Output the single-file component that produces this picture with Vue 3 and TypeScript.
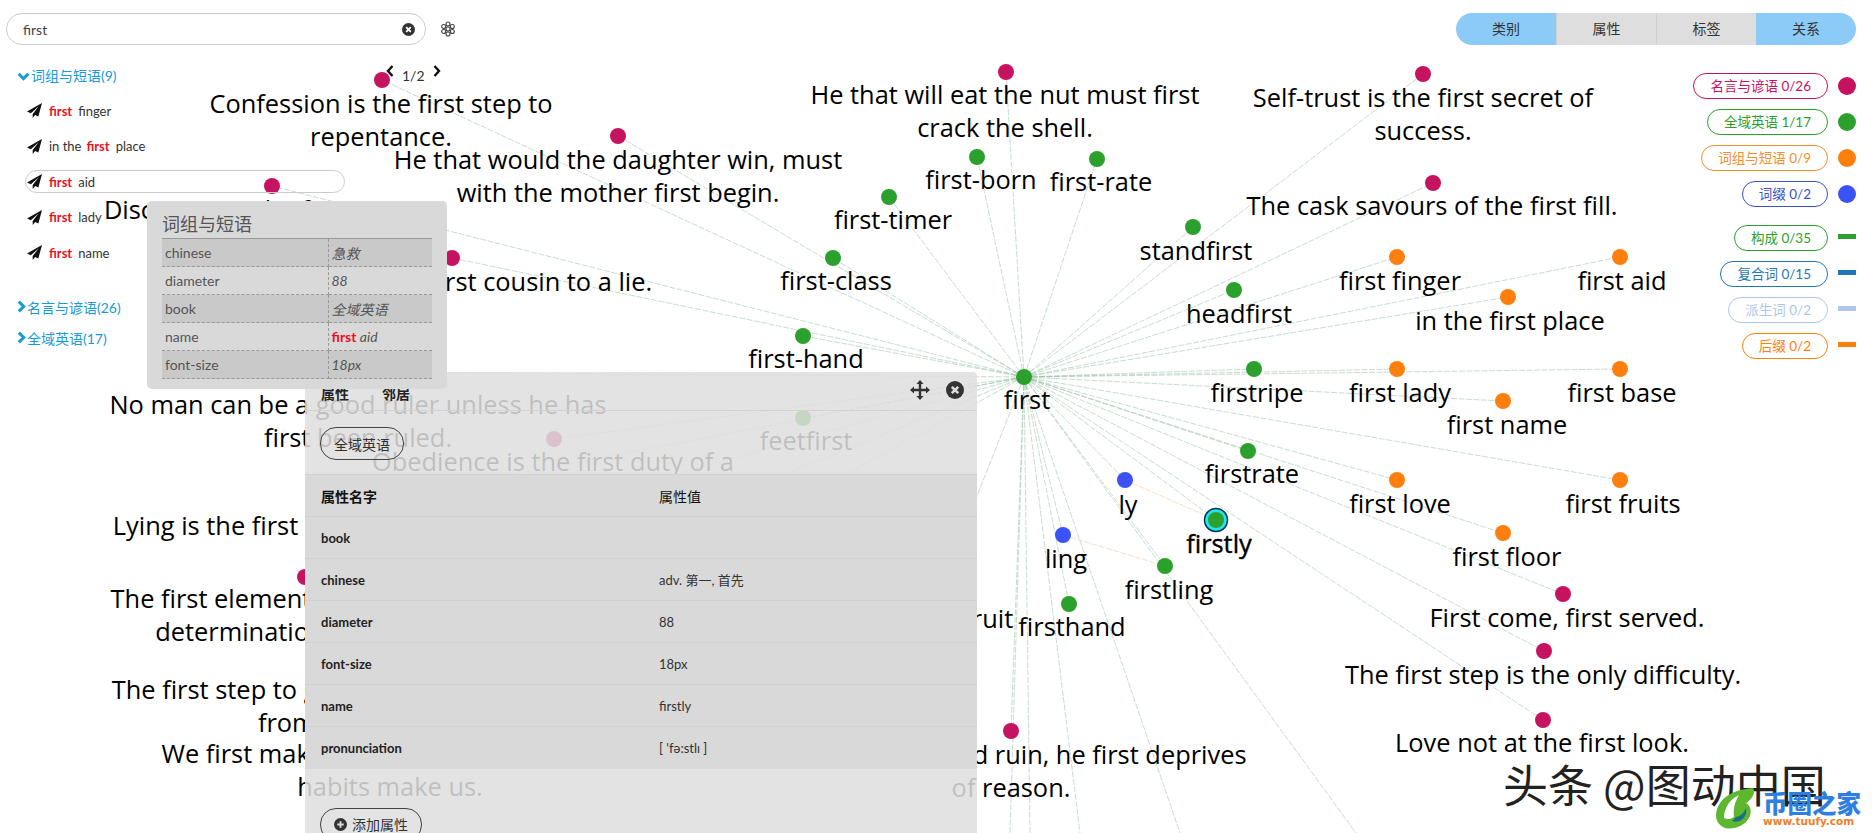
<script setup lang="ts">
import { ref } from 'vue'

interface GNode {
  x: number
  y: number
  c: 'm' | 'g' | 'o' | 'b'
  lines: string[]
  lx: number
  ly: number
}

const colors: Record<string, string> = { m: '#c6135f', g: '#2ca02c', o: '#ff7f0e', b: '#3b52f6' }
const center = { x: 1024, y: 377 }

const nodes: GNode[] = [
  { x: 382, y: 80, c: 'm', lines: ['Confession is the first step to', 'repentance.'], lx: 381, ly: 113 },
  { x: 618, y: 136, c: 'm', lines: ['He that would the daughter win, must', 'with the mother first begin.'], lx: 618, ly: 169 },
  { x: 272, y: 186, c: 'm', lines: ['Discretion is the first point'], lx: 260, ly: 219 },
  { x: 452, y: 258, c: 'm', lines: ['Flattery is the first cousin to a lie.'], lx: 458, ly: 291 },
  { x: 358, y: 372, c: 'm', lines: ['No man can be a good ruler unless he has', 'first been ruled.'], lx: 358, ly: 414 },
  { x: 554, y: 439, c: 'm', lines: ['Obedience is the first duty of a'], lx: 553, ly: 471 },
  { x: 380, y: 500, c: 'm', lines: ['Lying is the first step to the gallows.'], lx: 323, ly: 535 },
  { x: 305, y: 577, c: 'm', lines: ['The first element of success is the', 'determination to succeed.'], lx: 310, ly: 608 },
  { x: 330, y: 660, c: 'm', lines: ['The first step to getting somewhere is to decide', 'from where you stand.'], lx: 392, ly: 699 },
  { x: 388, y: 725, c: 'm', lines: ['We first make our habits, and then our', 'habits make us.'], lx: 390, ly: 763 },
  { x: 1011, y: 731, c: 'm', lines: ['Whom God would ruin, he first deprives', 'of reason.'], lx: 1011, ly: 764 },
  { x: 1006, y: 72, c: 'm', lines: ['He that will eat the nut must first', 'crack the shell.'], lx: 1005, ly: 104 },
  { x: 1423, y: 74, c: 'm', lines: ['Self-trust is the first secret of', 'success.'], lx: 1423, ly: 107 },
  { x: 1433, y: 183, c: 'm', lines: ['The cask savours of the first fill.'], lx: 1432, ly: 215 },
  { x: 1563, y: 594, c: 'm', lines: ['First come, first served.'], lx: 1567, ly: 627 },
  { x: 1544, y: 651, c: 'm', lines: ['The first step is the only difficulty.'], lx: 1543, ly: 684 },
  { x: 1543, y: 720, c: 'm', lines: ['Love not at the first look.'], lx: 1542, ly: 752 },
  { x: 977, y: 157, c: 'g', lines: ['first-born'], lx: 981, ly: 189 },
  { x: 1097, y: 159, c: 'g', lines: ['first-rate'], lx: 1101, ly: 191 },
  { x: 889, y: 197, c: 'g', lines: ['first-timer'], lx: 893, ly: 229 },
  { x: 1193, y: 227, c: 'g', lines: ['standfirst'], lx: 1196, ly: 260 },
  { x: 833, y: 258, c: 'g', lines: ['first-class'], lx: 836, ly: 290 },
  { x: 1234, y: 290, c: 'g', lines: ['headfirst'], lx: 1239, ly: 323 },
  { x: 803, y: 336, c: 'g', lines: ['first-hand'], lx: 806, ly: 368 },
  { x: 1254, y: 369, c: 'g', lines: ['firstripe'], lx: 1257, ly: 402 },
  { x: 803, y: 418, c: 'g', lines: ['feetfirst'], lx: 806, ly: 450 },
  { x: 1248, y: 451, c: 'g', lines: ['firstrate'], lx: 1252, ly: 483 },
  { x: 1216, y: 520, c: 'g', lines: ['firstly'], lx: 1219, ly: 553 },
  { x: 1165, y: 566, c: 'g', lines: ['firstling'], lx: 1169, ly: 599 },
  { x: 1069, y: 604, c: 'g', lines: ['firsthand'], lx: 1072, ly: 636 },
  { x: 940, y: 590, c: 'g', lines: ['firstfruit'], lx: 965, ly: 628 },
  { x: 1125, y: 480, c: 'b', lines: ['ly'], lx: 1128, ly: 514 },
  { x: 1063, y: 535, c: 'b', lines: ['ling'], lx: 1066, ly: 568 },
  { x: 1397, y: 257, c: 'o', lines: ['first finger'], lx: 1400, ly: 290 },
  { x: 1620, y: 257, c: 'o', lines: ['first aid'], lx: 1622, ly: 290 },
  { x: 1508, y: 297, c: 'o', lines: ['in the first place'], lx: 1510, ly: 330 },
  { x: 1397, y: 369, c: 'o', lines: ['first lady'], lx: 1400, ly: 402 },
  { x: 1620, y: 369, c: 'o', lines: ['first base'], lx: 1622, ly: 402 },
  { x: 1503, y: 401, c: 'o', lines: ['first name'], lx: 1507, ly: 434 },
  { x: 1397, y: 480, c: 'o', lines: ['first love'], lx: 1400, ly: 513 },
  { x: 1620, y: 480, c: 'o', lines: ['first fruits'], lx: 1623, ly: 513 },
  { x: 1503, y: 533, c: 'o', lines: ['first floor'], lx: 1507, ly: 566 }
]

const extraEnds = [
  { x: 1010, y: 833 },
  { x: 1030, y: 833 },
  { x: 1356, y: 833 },
  { x: 1180, y: 833 },
  { x: 1080, y: 833 }
]

const treeItems = [
  { before: '', after: 'finger' },
  { before: 'in the', after: 'place' },
  { before: '', after: 'aid', hover: true },
  { before: '', after: 'lady' },
  { before: '', after: 'name' }
]

const tabs = [
  { label: '类别', on: true },
  { label: '属性', on: false },
  { label: '标签', on: false },
  { label: '关系', on: true }
]

const legend = [
  { text: '名言与谚语 0/26', ink: '#c6135f', fill: '#c6135f' },
  { text: '全域英语 1/17', ink: '#2ca02c', fill: '#2ca02c' },
  { text: '词组与短语 0/9', ink: '#f09030', fill: '#ff7f0e' },
  { text: '词缀 0/2', ink: '#3b52c6', fill: '#3b52f6' }
]
const legend2 = [
  { text: '构成 0/35', ink: '#2ca02c', fill: '#2ca02c' },
  { text: '复合词 0/15', ink: '#1f77b4', fill: '#1f77b4' },
  { text: '派生词 0/2', ink: '#aec7e8', fill: '#aec7e8' },
  { text: '后缀 0/2', ink: '#ff7f0e', fill: '#ff7f0e' }
]

const popRows = [
  ['chinese', '急救'],
  ['diameter', '88'],
  ['book', '全域英语'],
  ['name', ''],
  ['font-size', '18px']
]

const attrs = [
  ['book', ''],
  ['chinese', 'adv. 第一, 首先'],
  ['diameter', '88'],
  ['font-size', '18px'],
  ['name', 'firstly'],
  ['pronunciation', "[ 'fə:stlɪ ]"]
]

const query = ref('first')
</script>

<template>
  <div class="page">
    <svg class="canvas" width="1874" height="833" viewBox="0 0 1874 833">
      <g class="edges">
        <line v-for="(n, i) in nodes" :key="'e' + i" :x1="center.x" :y1="center.y" :x2="n.x" :y2="n.y" />
        <line v-for="(e, i) in extraEnds" :key="'x' + i" :x1="center.x" :y1="center.y" :x2="e.x" :y2="e.y" />
        <line class="edge-o" x1="1125" y1="480" x2="1216" y2="520" />
        <line class="edge-o" x1="1063" y1="535" x2="1165" y2="566" />
      </g>
      <circle cx="1216" cy="520" r="11.5" fill="#22e6ee" stroke="#08324a" stroke-width="1.5" />
      <circle v-for="(n, i) in nodes" :key="'n' + i" :cx="n.x" :cy="n.y" r="8" :fill="colors[n.c]" />
      <circle :cx="center.x" :cy="center.y" r="8" fill="#2ca02c" />
      <g class="labels">
        <text :x="1027" :y="409">first</text>
        <template v-for="(n, i) in nodes" :key="'l' + i">
          <text
            v-for="(t, j) in n.lines"
            :key="j"
            :class="{ picked: t === 'firstly' }"
            :x="n.lx"
            :y="n.ly + j * 33"
          >{{ t }}</text>
        </template>
      </g>
    </svg>

    <div class="ui">
      <header class="top">
        <div class="search-wrap">
          <div class="search">
            <input v-model="query" class="search-input" />
            <svg class="x-icon" width="13" height="13" viewBox="0 0 14 14">
              <circle cx="7" cy="7" r="7" fill="#333" />
              <path d="M4.500 4.500l5 5M9.500 4.500l-5 5" stroke="#fff" stroke-width="2" />
            </svg>
          </div>
          <svg class="gear" width="16" height="16" viewBox="0 0 16 16" fill="none" stroke="#444" stroke-width="1.100">
            <circle cx="8" cy="8" r="2" />
            <circle cx="8" cy="3" r="2" />
            <circle cx="8" cy="13" r="2" />
            <circle cx="3.700" cy="5.500" r="2" />
            <circle cx="12.300" cy="5.500" r="2" />
            <circle cx="3.700" cy="10.500" r="2" />
            <circle cx="12.300" cy="10.500" r="2" />
          </svg>
        </div>
        <nav class="tabs">
          <div v-for="t in tabs" :key="t.label" class="tab" :class="{ on: t.on }">{{ t.label }}</div>
        </nav>
      </header>

      <div class="columns">
        <aside class="tree">
          <div class="group">
            <span class="chev">
              <svg width="13" height="9" viewBox="0 0 12 8"><path d="M1.500 1.500L6 6l4.500-4.500" fill="none" stroke="#1a9ad6" stroke-width="2.800" /></svg>
            </span>词组与短语(9)
          </div>
          <ul class="items">
            <li v-for="(it, i) in treeItems" :key="i" class="item" :class="{ hover: it.hover }">
              <svg class="plane" width="15" height="15" viewBox="0 0 14 14"><path d="M14 0L0 8l3.600 1.500L11 3 5.300 10.200V14l2.300-2.800 3 1.300z" fill="#111" /></svg>
              <span v-if="it.before" class="before">{{ it.before }}</span>
              <b class="hit">first</b>
              <span>{{ it.after }}</span>
            </li>
          </ul>
          <div class="group closed">
            <span class="chev">
              <svg width="9" height="13" viewBox="0 0 8 12"><path d="M1.500 1.500L6 6l-4.500 4.500" fill="none" stroke="#1a9ad6" stroke-width="2.800" /></svg>
            </span>名言与谚语(26)
          </div>
          <div class="group closed second">
            <span class="chev">
              <svg width="9" height="13" viewBox="0 0 8 12"><path d="M1.500 1.500L6 6l-4.500 4.500" fill="none" stroke="#1a9ad6" stroke-width="2.800" /></svg>
            </span>全域英语(17)
          </div>
        </aside>

        <aside class="legend">
          <div v-for="l in legend" :key="l.text" class="leg-row">
            <span class="pill" :style="{ color: l.ink }">{{ l.text }}</span>
            <i class="dot" :style="{ background: l.fill }"></i>
          </div>
          <div class="leg-gap"></div>
          <div v-for="l in legend2" :key="l.text" class="leg-row">
            <span class="pill" :style="{ color: l.ink }">{{ l.text }}</span>
            <i class="bar" :style="{ background: l.fill }"></i>
          </div>
        </aside>
      </div>
    </div>

    <div class="pager">
      <svg width="8" height="12" viewBox="0 0 8 12"><path d="M6.500 1L2 6l4.500 5" fill="none" stroke="#111" stroke-width="2.400" /></svg>
      <span>1/2</span>
      <svg width="8" height="12" viewBox="0 0 8 12"><path d="M1.500 1L6 6l-4.500 5" fill="none" stroke="#111" stroke-width="2.400" /></svg>
    </div>

    <section class="detail">
      <div class="d-head">
        <div class="d-tabs"><span>属性</span><span>邻居</span></div>
        <div class="d-tools">
          <svg width="20" height="20" viewBox="0 0 20 20" fill="#333">
            <path d="M10 0l3.500 4h-2.300v4.800H16V6.500l4 3.500-4 3.500v-2.300h-4.800V16h2.300L10 20l-3.500-4h2.300v-4.800H4v2.300L0 10l4-3.500v2.300h4.800V4H6.500z" />
          </svg>
          <svg width="18" height="18" viewBox="0 0 14 14">
            <circle cx="7" cy="7" r="7" fill="#333" />
            <path d="M4.500 4.500l5 5M9.500 4.500l-5 5" stroke="#ddd" stroke-width="2" />
          </svg>
        </div>
      </div>
      <div class="d-tag"><span class="round-btn">全域英语</span></div>
      <table class="d-table">
        <thead>
          <tr><th>属性名字</th><th>属性值</th></tr>
        </thead>
        <tbody>
          <tr v-for="a in attrs" :key="a[0]"><td class="k">{{ a[0] }}</td><td>{{ a[1] }}</td></tr>
        </tbody>
      </table>
      <div class="d-add">
        <span class="round-btn">
          <svg width="13" height="13" viewBox="0 0 14 14"><circle cx="7" cy="7" r="7" fill="#333" /><path d="M7 3.500v7M3.500 7h7" stroke="#ddd" stroke-width="2" /></svg>
          添加属性
        </span>
      </div>
    </section>

    <section class="pop">
      <h3 class="pop-title">词组与短语</h3>
      <table class="pop-table">
        <tbody>
          <tr v-for="r in popRows" :key="r[0]">
            <td>{{ r[0] }}</td>
            <td class="pv"><template v-if="r[0] === 'name'"><b class="hit upright">first</b> aid</template><template v-else>{{ r[1] }}</template></td>
          </tr>
        </tbody>
      </table>
    </section>

    <div class="mark">头条 @图动中国</div>
    <div class="brand">
      <svg width="40" height="42" viewBox="0 0 40 42">
        <path d="M1 28C2 14 14 3 38 1c3 5-1 11-7 15 5 3 6 9 3 15-5 9-19 13-26 9C3 37 1 33 1 28z" fill="#5db82f" />
        <path d="M9 31C9 21 14 13 24 8c-4 7-6 13-5 22-3 2-6 3-10 1z" fill="#fff" />
        <path d="M21 30c5-1 8-4 10-9 1 5-1 10-6 13-3 1-6 1-8 0z" fill="#17707d" />
      </svg>
      <div class="brand-text">
        <div class="brand-cn">币圈之家</div>
        <div class="brand-en">www.tuufy.com</div>
      </div>
    </div>
  </div>
</template>

<style>
html, body { margin: 0; padding: 0; background: #fff; overflow: hidden; }
</style>

<style scoped>
.page {
  position: relative;
  width: 1874px;
  height: 833px;
  overflow: hidden;
  background: #fff;
  font-family: Lato, "Noto Sans CJK SC", sans-serif;
  color: #333;
}
.canvas { position: absolute; left: 0; top: 0; }
.edges line { stroke: #86b596; stroke-width: 0.7; stroke-dasharray: 6 1.500; opacity: 0.65; }
.edges .edge-o { stroke: #f0b98a; }
.labels text {
  font-family: "Open Sans", "Noto Sans CJK SC", sans-serif;
  font-size: 25.400px;
  text-anchor: middle;
  fill: #000;
}
.labels text.picked { stroke: #000; stroke-width: 0.4; }
.ui { position: relative; }
.top {
  display: flex;
  justify-content: space-between;
  align-items: center;
  padding: 13px 18px 0 6px;
}
.search-wrap { display: flex; align-items: center; gap: 14px; }
.search {
  width: 420px;
  height: 32px;
  box-sizing: border-box;
  border: 1px solid #ccc;
  border-radius: 16px;
  display: flex;
  align-items: center;
  padding: 0 10px 0 16px;
  background: #fff;
}
.search-input {
  flex: 1;
  border: 0;
  outline: 0;
  background: transparent;
  font: 14px Lato, sans-serif;
  color: #444;
  padding: 0;
}
.tabs { display: flex; border-radius: 16px; overflow: hidden; }
.tab {
  width: 100px;
  height: 32px;
  line-height: 32px;
  text-align: center;
  font-size: 14px;
  background: #dedede;
  color: #333;
  box-sizing: border-box;
  border-left: 1px solid #d0d0d0;
}
.tab.on { background: #8ccbf7; border-left: 0; }
.columns { display: flex; justify-content: space-between; padding: 20px 18px 0 17px; }
.tree { width: 340px; }
.group { color: #1a9ad6; font-size: 14px; line-height: 22px; }
.chev { display: inline-block; margin-right: 1px; }
.items { list-style: none; margin: 12px 0 33px 8px; padding: 0; }
.item {
  display: flex;
  align-items: center;
  gap: 6px;
  width: 320px;
  height: 23px;
  margin-bottom: 12.500px;
  font-size: 13px;
  color: #333;
  box-sizing: border-box;
  padding-left: 1px;
  border: 1px solid transparent;
  border-radius: 12px;
}
.item.hover { border-color: #ccc; }
.plane { margin-right: 1px; }
.hit { color: #e8121e; font-weight: 700; }
.upright { font-style: normal; }
.before { margin-right: -1px; }
.second { margin-top: 9px; }
.legend { display: flex; flex-direction: column; align-items: flex-end; padding-top: 8px; }
.leg-row { display: flex; align-items: center; gap: 10px; height: 26px; margin-bottom: 10px; }
.leg-gap { height: 8px; }
.pill {
  display: block;
  height: 26px;
  line-height: 24px;
  box-sizing: border-box;
  padding: 0 16px;
  border: 1px solid currentColor;
  border-radius: 13px;
  font-size: 13.500px;
  background: #fff;
}
.dot { width: 18px; height: 18px; border-radius: 50%; display: block; }
.bar { width: 18px; height: 5px; display: block; margin-top: -4px; }
.pager {
  position: absolute;
  left: 386px;
  top: 65px;
  display: flex;
  gap: 8px;
  font-size: 14px;
  align-items: flex-start;
}
.pager span { margin-top: 2px; }
.detail {
  position: absolute;
  left: 305px;
  top: 372px;
  width: 672px;
  height: 480px;
  background: rgba(222, 222, 222, 0.86);
  border-radius: 4px 4px 0 0;
}
.d-head { display: flex; justify-content: space-between; height: 38px; border-bottom: 1px solid #d2d2d2; }
.d-tabs { display: flex; gap: 33px; padding: 11px 0 0 16px; font-size: 14px; font-weight: 700; color: #222; }
.d-tools { display: flex; align-items: center; gap: 16px; padding: 0 13px 0 0; height: 36px; }
.d-tag { height: 63px; padding: 16px 0 0 15px; box-sizing: border-box; }
.round-btn {
  display: inline-flex;
  align-items: center;
  gap: 5px;
  height: 33px;
  box-sizing: border-box;
  padding: 0 13px;
  border: 1px solid #444;
  border-radius: 16px;
  font-size: 14px;
  color: #333;
}
.d-table {
  width: 100%;
  border-collapse: collapse;
  table-layout: fixed;
  background: #d9d9d9;
  font-size: 13px;
}
.d-table th, .d-table td {
  height: 42px;
  box-sizing: border-box;
  padding: 0 0 0 16px;
  text-align: left;
  border-top: 1px solid #d0d0d0;
  color: #333;
}
.d-table th { color: #111; font-weight: 700; font-size: 14px; }
.d-table th:last-child { font-weight: 400; }
.d-table th:first-child, .d-table td:first-child { width: 338px; }
.d-table .k { font-weight: 700; color: #222; }
.d-add { padding: 39px 0 0 15px; }
.pop {
  position: absolute;
  left: 147px;
  top: 201px;
  width: 300px;
  height: 188px;
  box-sizing: border-box;
  padding: 10px 15px 0;
  background: #d9d9d9;
  border-radius: 5px;
}
.pop-title { margin: 0; font-weight: 400; font-size: 18px; line-height: 27px; color: #555; }
.pop-table {
  width: 270px;
  border-collapse: collapse;
  table-layout: fixed;
  font-size: 14px;
  color: #555;
  border-top: 1px solid #999;
}
.pop-table td {
  height: 28px;
  box-sizing: border-box;
  padding: 0 3px;
  border-bottom: 1px dashed #999;
}
.pop-table td:first-child { width: 166px; border-right: 1px dashed #999; }
.pop-table tr:nth-child(odd) { background: #c9c9c9; }
.pv { font-style: italic; }
.mark {
  position: absolute;
  left: 1503px;
  top: 754px;
  font-family: "Noto Sans CJK SC", sans-serif;
  font-size: 45px;
  line-height: 60px;
  color: #222;
  white-space: nowrap;
}
.brand {
  position: absolute;
  left: 1715px;
  top: 787px;
  display: flex;
  gap: 8px;
}
.brand-cn {
  font-family: "Noto Sans CJK SC", sans-serif;
  font-weight: 900;
  font-size: 24.500px;
  line-height: 26px;
  margin-top: 3px;
  color: #2f7fe0;
  white-space: nowrap;
}
.brand-en {
  font-family: "DejaVu Sans", sans-serif;
  font-weight: 700;
  font-size: 10.500px;
  line-height: 11px;
  color: #ee7f2a;
  white-space: nowrap;
}
</style>
